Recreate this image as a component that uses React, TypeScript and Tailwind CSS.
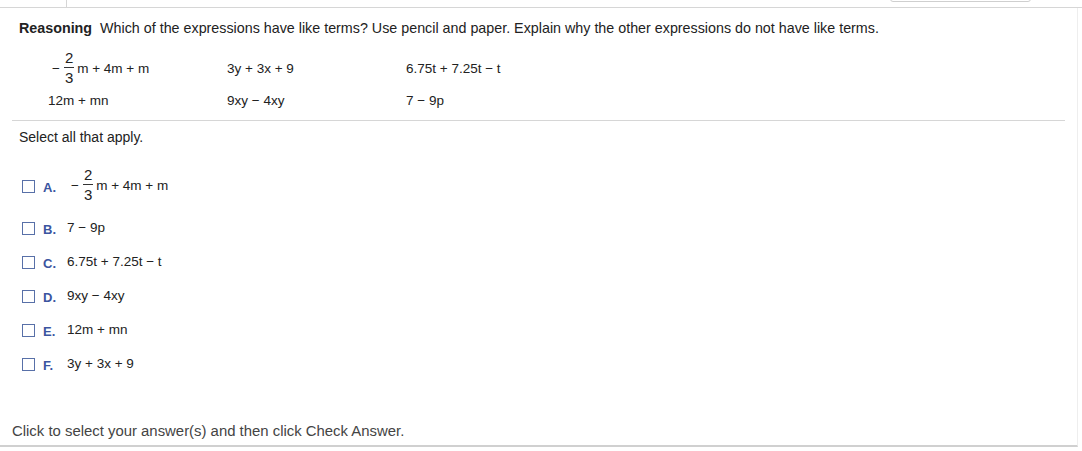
import React from 'react'

const Frac: React.FC<{ n: string; d: string }> = ({ n, d }) => (
  <span className="inline-flex flex-col items-center mb-[3px] mx-[3px] text-[15px] leading-[15px]">
    <span className="px-[1px] pb-[2px]">{n}</span>
    <span className="w-full border-t border-[#333] px-[1px] pt-[2px]">{d}</span>
  </span>
)

const FracExpr: React.FC = () => (
  <span className="inline-flex items-center ml-[4px]">
    <span className="mr-[1px]">−</span>
    <Frac n="2" d="3" />
    <span>m + 4m + m</span>
  </span>
)

const options: { key: string; expr: React.ReactNode; h: string }[] = [
  { key: 'A.', expr: <FracExpr />, h: 'h-[50px]' },
  { key: 'B.', expr: '7 − 9p', h: 'h-[34px]' },
  { key: 'C.', expr: '6.75t + 7.25t − t', h: 'h-[34px]' },
  { key: 'D.', expr: '9xy − 4xy', h: 'h-[34px]' },
  { key: 'E.', expr: '12m + mn', h: 'h-[34px]' },
  { key: 'F.', expr: '3y + 3x + 9', h: 'h-[34px]' },
]

export default function App() {
  return (
    <div className="w-[1082px] h-[451px] bg-white font-['Liberation_Sans',Arial,sans-serif] text-[#222] overflow-hidden">
      {/* top toolbar edge */}
      <div className="h-[8px] border-b border-[#d6d6d6] flex items-end overflow-hidden">
        <div className="w-[67px] h-full border-r border-[#d6d6d6]" />
        <div className="flex-1" />
        <div className="w-[141px] h-[20px] mb-[5px] mr-[51px] border border-[#cfcfcf] rounded-[3px] shrink-0" />
      </div>

      <div className="h-[439px] w-[1078px] border-r border-[#eeeeee] border-b-2 border-b-[#d0d0d0] flex flex-col px-[12px]">
        {/* question */}
        <div className="px-[7px] pt-[12px] text-[14.3px] leading-[16px]">
          <span className="font-bold">Reasoning</span>
          <span className="ml-[8px]">
            Which of the expressions have like terms? Use pencil and paper. Explain why the other expressions do not
            have like terms.
          </span>
        </div>

        {/* expressions */}
        <div className="pl-[36px] pt-[16px] text-[13.5px] grid grid-cols-[179px_179px_200px]">
          <div className="h-[34px] flex items-center">
            <FracExpr />
          </div>
          <div className="h-[34px] flex items-center">3y + 3x + 9</div>
          <div className="h-[34px] flex items-center">6.75t + 7.25t − t</div>
          <div className="h-[30px] flex items-center">12m + mn</div>
          <div className="h-[30px] flex items-center">9xy − 4xy</div>
          <div className="h-[30px] flex items-center">7 − 9p</div>
        </div>

        <div className="mt-[4px] border-t border-[#d6d6d6]" />

        <div className="px-[7px] pt-[8px] text-[14px] leading-[16px]">Select all that apply.</div>

        {/* choices */}
        <div className="pl-[10px] pt-[16px] flex flex-col">
          {options.map((o) => (
            <label key={o.key} className={`${o.h} flex items-center cursor-pointer`}>
              <span className="w-[13px] h-[13px] border border-[#5870a8] bg-white shrink-0" />
              <span className="ml-[8px] w-[24px] text-[13px] font-bold text-[#3b55a0] pt-[3px]">{o.key}</span>
              <span className="text-[13.5px]">{o.expr}</span>
            </label>
          ))}
        </div>

        <div className="flex-1" />
        <div className="pb-[5px] text-[14.9px] leading-[18px] text-[#444]">
          Click to select your answer(s) and then click Check Answer.
        </div>
      </div>
    </div>
  )
}
